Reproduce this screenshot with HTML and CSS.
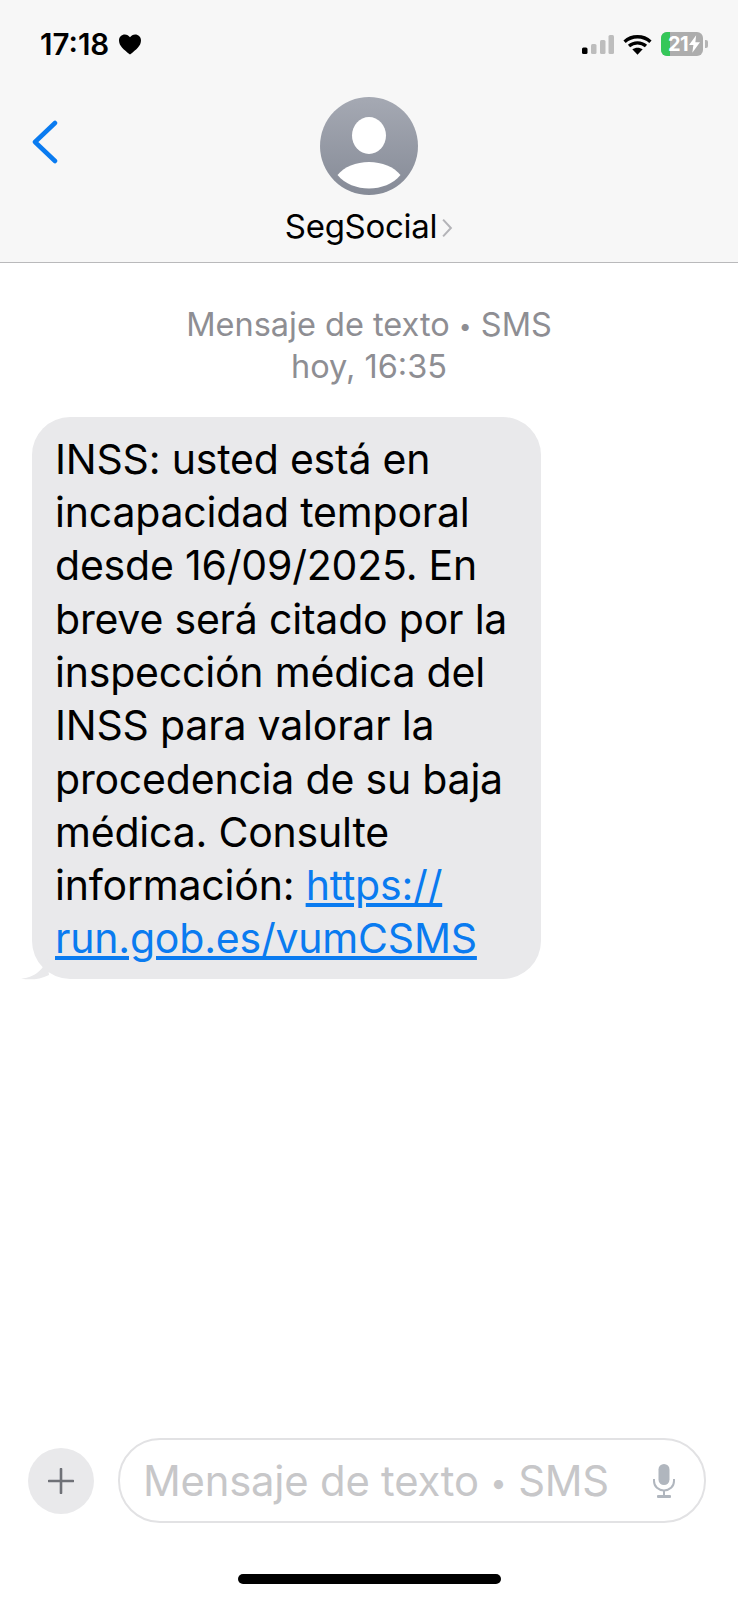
FILE: index.html
```html
<!DOCTYPE html>
<html lang="es">
<head>
    <meta charset="UTF-8">
    <meta name="viewport" content="width=device-width, initial-scale=1.0">
    <title>SegSocial</title>
    <link rel="stylesheet" href="styles.css">
</head>
<body>
    <header class="top">
        <div class="status">
            <div class="clock">
                <span>17:18</span>
                <svg class="heart" viewBox="0 0 24 22"><path d="M12 21.500C5 16 .5 12.200.5 6.800.5 3.200 3.200.5 6.600.5c2.200 0 4.200 1.100 5.400 3 1.200-1.900 3.200-3 5.400-3 3.400 0 6.100 2.700 6.100 6.300 0 5.400-4.500 9.200-11.500 14.700z" fill="#000"/></svg>
            </div>
            <div class="status_icons">
                <svg class="signal" viewBox="0 0 32 19">
                    <rect x="0" y="12.500" width="5.500" height="6.500" rx="1.500" fill="#000"/>
                    <rect x="9" y="9" width="5.500" height="10" rx="1.500" fill="#bdbdbd"/>
                    <rect x="18" y="5" width="5.500" height="14" rx="1.500" fill="#bdbdbd"/>
                    <rect x="26.500" y="0" width="5.500" height="19" rx="1.500" fill="#bdbdbd"/>
                </svg>
                <svg class="wifi" viewBox="0 0 28 20">
                    <path d="M1.500 7.400C8.500.9 19.500.9 26.500 7.400M5.800 11.500c4.700-4.200 11.700-4.200 16.400 0" fill="none" stroke="#000" stroke-width="3.200"/>
                    <path d="M14 20l-5-5.300c2.900-2.200 7.100-2.200 10 0z" fill="#000"/>
                </svg>
                <div class="battery">
                    <div class="battery_fill"></div>
                    <span class="battery_text">21</span>
                    <svg class="bolt" viewBox="0 0 10 16"><path d="M6.500 0L0 9h4l-1 7 7-9.500H5.800z" fill="#fff"/></svg>
                </div>
                <div class="battery_cap"></div>
            </div>
        </div>
        <div class="nav">
            <svg class="back" viewBox="0 0 26 44"><path d="M23 3L3 22l20 19" fill="none" stroke="#0a7bf0" stroke-width="4.500" stroke-linecap="round" stroke-linejoin="round"/></svg>
            <div class="contact">
                <svg class="avatar" viewBox="0 0 98 98">
                    <defs>
                        <linearGradient id="avatar_bg" x1="0" y1="0" x2="0" y2="1">
                            <stop offset="0" stop-color="#a5a9b3"/>
                            <stop offset="1" stop-color="#868b97"/>
                        </linearGradient>
                    </defs>
                    <circle cx="49" cy="49" r="49" fill="url(#avatar_bg)"/>
                    <ellipse cx="49" cy="38.500" rx="17" ry="18.500" fill="#fff"/>
                    <path d="M17.500 78C24 70 36 65 49 65s25 5 31.500 13C73 87 61 91.500 49 91.500S25 87 17.500 78z" fill="#fff"/>
                </svg>
                <div class="name">SegSocial<svg class="chevron" viewBox="0 0 10 18"><path d="M1.500 1.500L8.500 9l-7 7.500" fill="none" stroke="#b4b4b8" stroke-width="1.800"/></svg></div>
            </div>
        </div>
    </header>

    <main class="chat">
        <p class="stamp">Mensaje de texto <span class="dot">•</span> SMS<br>hoy, 16:35</p>
        <div class="bubble">
            INSS: usted está en<br>
            incapacidad temporal<br>
            desde 16/09/2025. En<br>
            breve será citado por la<br>
            inspección médica del<br>
            INSS para valorar la<br>
            procedencia de su baja<br>
            médica. Consulte<br>
            información: <a href="#">https://<br>run.gob.es/vumCSMS</a>
            <svg class="tail" viewBox="0 0 28 22"><path d="M26 0C24 10 14 20 0 20.500 8 22 18 22 28 17z" fill="#e9e9eb"/></svg>
        </div>
    </main>

    <footer class="composer">
        <div class="plus">
            <svg viewBox="0 0 26 26"><path d="M13 1v24M1 13h24" stroke="#6f7177" stroke-width="2.600" stroke-linecap="round"/></svg>
        </div>
        <div class="input">
            <span class="placeholder">Mensaje de texto <span class="dot">•</span> SMS</span>
            <svg class="mic" viewBox="0 0 24 34">
                <rect x="6.500" y="0" width="11" height="21" rx="5.500" fill="#b0b6be"/>
                <path d="M2 15v2c0 5.500 4.500 9.500 10 9.500s10-4 10-9.500v-2" fill="none" stroke="#b0b6be" stroke-width="2"/>
                <path d="M12 26v5" stroke="#b0b6be" stroke-width="2"/>
                <rect x="5" y="31" width="14" height="3" rx="1" fill="#b0b6be"/>
            </svg>
        </div>
    </footer>
    <div class="home_wrap"><div class="home_bar"></div></div>
</body>
</html>
```

FILE: styles.css
```css
*{
    margin: 0;
    padding: 0;
    box-sizing: border-box;
}
body{
    height: 1600px;
    display: flex;
    flex-direction: column;
    font-family: Inter, "Liberation Sans", sans-serif;
    background: #fff;
    color: #000;
    overflow: hidden;
}
.top{
    height: 263px;
    background: #f7f7f7;
    border-bottom: 1px solid #b9b9bb;
}
.status{
    height: 90px;
    padding: 29px 30px 0 40px;
    display: flex;
    justify-content: space-between;
    align-items: flex-start;
}
.clock{
    display: flex;
    align-items: center;
    gap: 9px;
    font-size: 29.500px;
    font-weight: 600;
    line-height: 30px;
}
.heart{
    width: 24px;
    height: 21px;
}
.status_icons{
    display: flex;
    align-items: center;
    padding-top: 3px;
}
.signal{
    width: 32px;
    height: 19px;
    margin-right: 9px;
}
.wifi{
    width: 29px;
    height: 21px;
    margin-right: 9px;
}
.battery{
    position: relative;
    width: 42px;
    height: 24px;
    border-radius: 6px;
    background: #adadad;
    overflow: hidden;
    display: flex;
    align-items: center;
    padding-left: 7px;
    color: #fff;
}
.battery_fill{
    position: absolute;
    left: 0;
    top: 0;
    bottom: 0;
    width: 9px;
    background: #35c759;
}
.battery_text{
    position: relative;
    font-size: 20px;
    font-weight: 700;
    line-height: 24px;
    letter-spacing: -0.5px;
}
.bolt{
    position: relative;
    width: 11px;
    height: 18px;
    margin-left: 1px;
}
.battery_cap{
    width: 3px;
    height: 8px;
    margin-left: 2px;
    border-radius: 0 2px 2px 0;
    background: #b5b5b5;
}
.nav{
    position: relative;
    display: flex;
    justify-content: center;
    padding-top: 7px;
}
.back{
    position: absolute;
    left: 32px;
    top: 30px;
    width: 26px;
    height: 44px;
}
.contact{
    display: flex;
    flex-direction: column;
    align-items: center;
}
.avatar{
    width: 98px;
    height: 98px;
}
.name{
    display: flex;
    align-items: center;
    margin-top: 12px;
    font-size: 33px;
    line-height: 38px;
    letter-spacing: -0.3px;
}
.chevron{
    width: 12px;
    height: 20px;
    margin-left: 4px;
    margin-top: 3px;
}
.chat{
    flex: 1;
    padding: 0 32px;
}
.stamp{
    padding-top: 41px;
    text-align: center;
    font-size: 32.500px;
    line-height: 41px;
    color: #8e8e93;
}
.dot{
    font-size: 0.7em;
    vertical-align: 0.1em;
}
.bubble{
    position: relative;
    width: 509px;
    height: 562px;
    margin-top: 30px;
    padding: 16px 10px 0 23px;
    border-radius: 38px;
    background: #e9e9eb;
    font-size: 41px;
    line-height: 53.300px;
    letter-spacing: -0.2px;
    white-space: nowrap;
}
.bubble a{
    color: #0a7bf0;
}
.tail{
    position: absolute;
    left: -11px;
    bottom: -1px;
    width: 28px;
    height: 22px;
}
.composer{
    display: flex;
    align-items: center;
    gap: 24px;
    padding: 0 32px 0 28px;
    margin-bottom: 51px;
}
.plus{
    width: 66px;
    height: 66px;
    border-radius: 50%;
    background: #e9e9eb;
    display: flex;
    align-items: center;
    justify-content: center;
}
.plus svg{
    width: 26px;
    height: 26px;
}
.input{
    flex: 1;
    height: 85px;
    padding: 0 28px 0 23px;
    border: 2px solid #e2e2e4;
    border-radius: 42px;
    display: flex;
    align-items: center;
    justify-content: space-between;
}
.placeholder{
    font-size: 41.800px;
    color: #c7c7c9;
    letter-spacing: -0.2px;
}
.mic{
    width: 24px;
    height: 34px;
}
.home_wrap{
    height: 26px;
    display: flex;
    justify-content: center;
}
.home_bar{
    width: 263px;
    height: 10px;
    border-radius: 5px;
    background: #000;
}
```
